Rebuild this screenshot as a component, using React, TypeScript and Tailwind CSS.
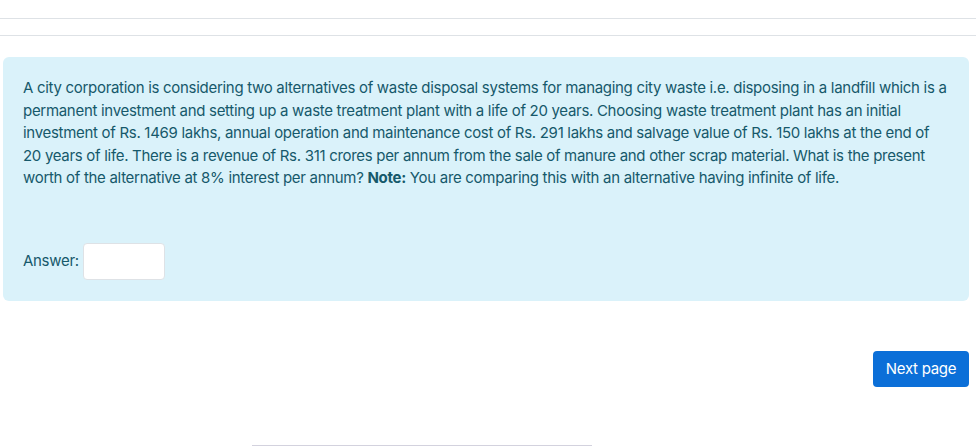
export default function App() {
  return (
    <div
      className="w-[976px] h-[446px] bg-white overflow-hidden flex flex-col text-[15px] leading-[22.5px] tracking-[-0.3px]"
      style={{ fontFamily: 'Inter, "Liberation Sans", sans-serif' }}
    >
      {/* header rules */}
      <div className="h-[19px] border-b border-[#dee2e6] shrink-0" />
      <div className="h-[17px] border-b border-[#dee2e6] shrink-0" />

      {/* question formulation */}
      <div className="mt-[21px] ml-[3px] w-[966px] h-[244px] rounded-[6px] bg-[#daf2fa] text-[#16596b] px-5 pt-5 pb-5 flex flex-col shrink-0">
        <p className="whitespace-nowrap">
          A city corporation is considering two alternatives of waste disposal systems for managing city waste i.e. disposing in a
          landfill which is a<br />
          permanent investment and setting up a waste treatment plant with a life of 20 years. Choosing waste treatment plant has an
          initial<br />
          investment of Rs. 1469 lakhs, annual operation and maintenance cost of Rs. 291 lakhs and salvage value of Rs. 150 lakhs at
          the end of<br />
          20 years of life. There is a revenue of Rs. 311 crores per annum from the sale of manure and other scrap material. What is the
          present<br />
          worth of the alternative at 8% interest per annum? <strong className="font-bold">Note:</strong> You are comparing this with
          an alternative having infinite of life.
        </p>

        <div className="mt-[53px] flex items-center gap-[4px]">
          <label>Answer:</label>
          <input
            type="text"
            className="w-[82px] h-[37px] bg-white border border-[#dee2e6] rounded-[4px] px-2 text-[#1d2125] focus:outline-none"
          />
        </div>
      </div>

      {/* navigation */}
      <div className="flex justify-end pr-[7px] mt-[50px] shrink-0">
        <button className="w-[96px] h-[36px] rounded-[4px] bg-[#0b6fd8] text-white text-[15px]">Next page</button>
      </div>

      <div className="mt-auto ml-[252px] w-[340px] border-t border-[#d3d2de] shrink-0" />
    </div>
  )
}
